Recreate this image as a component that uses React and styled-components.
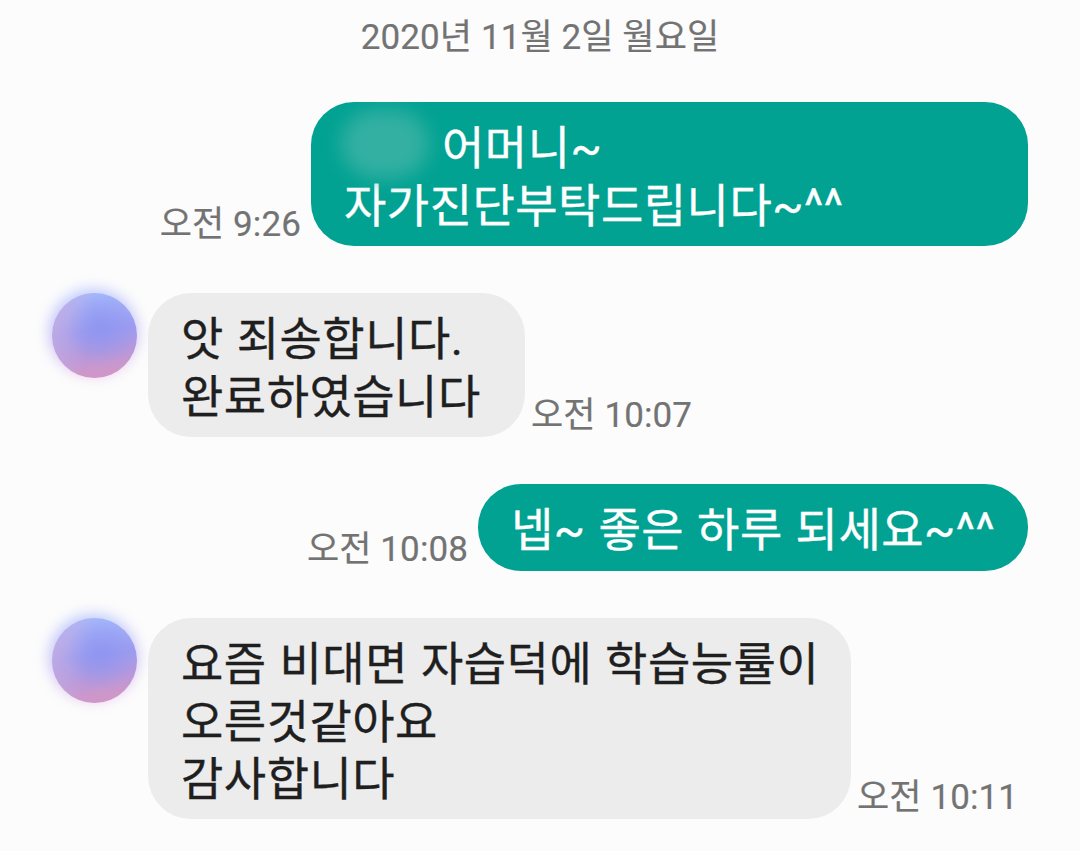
import React, { Component } from 'react';
import styled, { createGlobalStyle } from 'styled-components';

const GlobalStyle = createGlobalStyle`
    body {
        margin: 0;
        background-color: #fcfcfc;
    }
`

const Container = styled.div`
    display: flex;
    flex-direction: column;
    width: 1080px;
    height: 851px;
    overflow: hidden;
    background-color: #fcfcfc;
    font-family: Roboto, "Noto Sans CJK KR", sans-serif;
`

const DateLabel = styled.div`
    display: flex;
    height: 66px;
    justify-content: center;
    align-items: center;
    padding-bottom: 8px;
    font-size: 35px;
    letter-spacing: 0.1px;
    color: #737373;
    -webkit-text-stroke: 0.2px #737373;
    white-space: pre;
`

const Messages = styled.div`
    display: flex;
    flex-direction: column;
    gap: 47px;
    padding: 28px 52px 0;
`

const Row = styled.div`
    display: flex;
    flex-direction: ${props => props.$mine ? 'row-reverse' : 'row'};
    align-items: flex-end;
`

const Avatar = styled.div`
    position: relative;
    align-self: flex-start;
    flex-shrink: 0;
    width: 85px;
    height: 85px;
    margin-right: 11px;
    border-radius: 50%;
    background:
        radial-gradient(circle at 58% 42%, rgba(140, 148, 240, 0.8), rgba(150, 143, 232, 0) 50%),
        linear-gradient(100deg, rgba(205, 175, 222, 0.8) 0%, rgba(160, 155, 240, 0) 45%),
        linear-gradient(172deg, #a3b6fb 8%, #9c9cf0 45%, #b598dc 68%, #cf97c9 88%);

    &::before {
        content: '';
        position: absolute;
        z-index: -1;
        inset: -4px -1px 2px -3px;
        border-radius: 50%;
        background: linear-gradient(172deg, #a0b8ff, #b4a8f4 55%, #e8b0dc);
        filter: blur(7px);
        opacity: 0.7;
    }
`

const Thread = styled.div`
    position: relative;
    z-index: 0;
`

const Bubble = styled.div`
    position: relative;
    flex-shrink: 0;
    box-sizing: border-box;
    width: ${props => props.$width}px;
    height: ${props => props.$height}px;
    padding: 18px 33px 0;
    border-radius: 43px;
    overflow: hidden;
    background-color: ${props => props.$mine ? '#01a292' : '#ececec'};
    color: ${props => props.$mine ? '#ffffff' : '#1f1f1f'};
    font-size: 46px;
    line-height: 57.5px;
    -webkit-text-stroke: 0.35px currentColor;
`

const Line = styled.div`
    height: 57.5px;
    padding-left: ${props => props.$indent || 0}px;
    letter-spacing: 0.5px;
    word-spacing: 1px;
    white-space: pre;
`

const Smudge = styled.div`
    position: absolute;
    top: 8px;
    left: 30px;
    width: 88px;
    height: 68px;
    border-radius: 34px;
    background-color: #34b0a3;
    filter: blur(10px);
`

const Time = styled.div`
    margin: 0 ${props => props.$mine ? 10 : 6}px;
    height: 44px;
    font-size: 35px;
    line-height: 46px;
    letter-spacing: 0.1px;
    color: #737373;
    -webkit-text-stroke: 0.2px #737373;
    white-space: pre;
`

const messages = [
    {
        id: 1, mine: true, time: '오전 9:26', width: 717, height: 144, hidden: true,
        lines: [{ text: '어머니~', indent: 98 }, { text: '자가진단부탁드립니다~^^' }],
    },
    {
        id: 2, time: '오전 10:07', width: 377, height: 144,
        lines: [{ text: '앗 죄송합니다.' }, { text: '완료하였습니다' }],
    },
    {
        id: 3, mine: true, time: '오전 10:08', width: 550, height: 87,
        lines: [{ text: '넵~ 좋은 하루 되세요~^^' }],
    },
    {
        id: 4, time: '오전 10:11', width: 703, height: 201,
        lines: [{ text: '요즘 비대면 자습덕에 학습능률이' }, { text: '오른것같아요' }, { text: '감사합니다' }],
    },
]

class App extends Component {

    // -- Renders --

    renderMessage = m => {
        return (
            <Row key={m.id} $mine={m.mine}>
                {!m.mine && <Avatar />}
                <Bubble $mine={m.mine} $width={m.width} $height={m.height}>
                    {m.hidden && <Smudge />}
                    {m.lines.map(l => (
                        <Line key={l.text} $indent={l.indent}>{l.text}</Line>
                    ))}
                </Bubble>
                <Time $mine={m.mine}>{m.time}</Time>
            </Row>
        );
    }

    render() {
        return (
            <Container>
                <GlobalStyle />
                <DateLabel>2020년 11월 2일 월요일</DateLabel>
                <Thread>
                    <Messages>
                        {messages.map(this.renderMessage)}
                    </Messages>
                </Thread>
            </Container>
        );
    }
}

export default App;
